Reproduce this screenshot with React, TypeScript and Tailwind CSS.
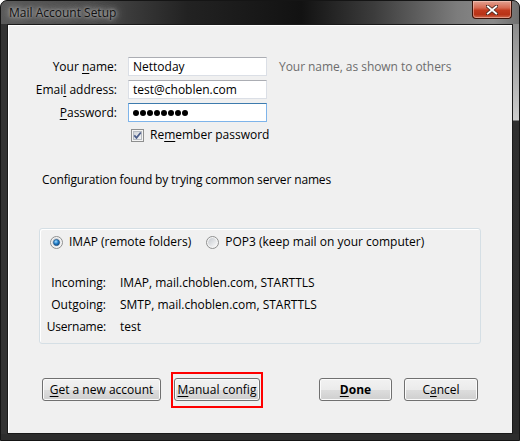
import React from 'react';

// Mnemonic letter, underlined like a Win32 access key
function U({ children }: { children: React.ReactNode }) {
  return <span className="underline decoration-1 underline-offset-[2px]">{children}</span>;
}

function Checkbox() {
  return (
    <svg width="13" height="13" viewBox="0 0 13 13" className="shrink-0">
      <defs>
        <linearGradient id="cbInner" x1="0" y1="0" x2="1" y2="1">
          <stop offset="0" stopColor="#cdd1d6" />
          <stop offset="1" stopColor="#f7f7f7" />
        </linearGradient>
      </defs>
      <rect x="0.5" y="0.5" width="12" height="12" fill="#f4f4f4" stroke="#8e8f8f" />
      <rect x="2.5" y="2.5" width="8" height="8" fill="url(#cbInner)" stroke="#b7bcc2" />
      <path d="M3.3 6.4 L5.5 8.9 L9.8 3.5" fill="none" stroke="#4b5d8a" strokeWidth="1.7" />
    </svg>
  );
}

function Radio({ checked }: { checked?: boolean }) {
  const id = checked ? 'on' : 'off';
  return (
    <svg width="13" height="13" viewBox="0 0 13 13" className="shrink-0">
      <defs>
        <linearGradient id={`rg-${id}`} x1="0" y1="0" x2="1" y2="1">
          <stop offset="0" stopColor="#c4c8ce" />
          <stop offset="1" stopColor="#fbfbfb" />
        </linearGradient>
        <radialGradient id={`rd-${id}`} cx="0.4" cy="0.35" r="0.7">
          <stop offset="0" stopColor="#a6dcff" />
          <stop offset="0.5" stopColor="#2381cb" />
          <stop offset="1" stopColor="#0d4680" />
        </radialGradient>
      </defs>
      <circle cx="6.5" cy="6.5" r="6" fill="#f4f4f4" stroke="#8e8f8f" />
      <circle cx="6.5" cy="6.5" r="4.4" fill={`url(#rg-${id})`} />
      {checked && <circle cx="6.5" cy="6.5" r="3.1" fill={`url(#rd-${id})`} stroke="#1a4a78" strokeWidth="0.6" />}
    </svg>
  );
}

function WinButton({ className, children }: { className: string; children: React.ReactNode }) {
  return (
    <button
      className={`h-[23px] whitespace-nowrap rounded-[3px] border border-[#707070] bg-[linear-gradient(to_bottom,#f2f2f2_0%,#ebebeb_50%,#dddddd_51%,#cfcfcf_100%)] text-[12px] leading-[16px] text-black shadow-[inset_0_0_0_1px_#fbfbfb] ${className}`}
    >
      {children}
    </button>
  );
}

function CloseButton() {
  return (
    <div className="ml-auto mr-[7px] flex h-[18px] w-[40px] items-center justify-center rounded-b-[4px] border border-t-0 border-[#3b1208] bg-[linear-gradient(to_bottom,#e3a292_0%,#d66a52_40%,#c23a1e_55%,#b83216_80%,#cf6a4e_100%)] shadow-[inset_0_0_0_1px_rgba(255,220,210,0.45)]">
      <svg width="12" height="10" viewBox="0 0 12 10">
        <path d="M1.5 1.2 L10.5 8.8 M10.5 1.2 L1.5 8.8" stroke="#4a2a22" strokeWidth="3.4" strokeLinecap="square" />
        <path d="M1.8 1.5 L10.2 8.5 M10.2 1.5 L1.8 8.5" stroke="#ffffff" strokeWidth="1.9" strokeLinecap="square" />
      </svg>
    </div>
  );
}

export default function App() {
  return (
    <div className="h-[441px] w-[520px] bg-white">
      <div className="flex h-[441px] w-[520px] flex-col overflow-hidden rounded-t-[7px] border border-[#151515] bg-[#2d2d2d] font-['Open_Sans',sans-serif] text-[12px] text-black">
        {/* Title bar */}
        <div className="flex h-[23px] items-start bg-[linear-gradient(to_right,#5a5a5a_0%,#4a4a4a_18%,#222222_36%,#121212_58%,#3c3c3c_72%,#7c7c7c_88%,#8a8a8a_95%,#707070_100%)]">
          <span className="ml-[8px] mt-[4px] whitespace-nowrap leading-[16px] text-[#111111] [text-shadow:0_0_3px_#b8b8b8,0_0_6px_#aaaaaa,0_0_10px_#999999,0_0_14px_#8a8a8a]">
            Mail Account Setup
          </span>
          <CloseButton />
        </div>

        <div className="flex flex-1">
          <div className="w-[6px] bg-[#333333]" />

          {/* Client area */}
          <div className="flex w-[506px] flex-col border border-[#1a1a1a] bg-[#f0f0f0] shadow-[inset_1px_1px_0_#ffffff]">
            {/* Identity fields */}
            <div className="mt-[32px] grid grid-cols-[109px_139px_1fr] gap-x-[11px] gap-y-[4px]">
              <label className="h-[19px] text-right leading-[19px]">
                Your <U>n</U>ame:
              </label>
              <div className="h-[19px] border border-[#dbdfe6] border-t-[#abadb3] bg-white pl-[4px] leading-[17px]">Nettoday</div>
              <span className="whitespace-nowrap pl-px leading-[19px] tracking-[-0.05px] text-[#6d6d6d]">Your name, as shown to others</span>

              <label className="h-[19px] text-right leading-[19px]">
                Emai<U>l</U> address:
              </label>
              <div className="h-[19px] border border-[#dbdfe6] border-t-[#abadb3] bg-white pl-[4px] leading-[17px]">test@choblen.com</div>
              <span />

              <label className="h-[19px] text-right leading-[19px]">
                <U>P</U>assword:
              </label>
              <div className="flex h-[19px] items-center gap-[1px] border border-[#7eb4ea] border-t-[#3d7bad] bg-white pl-[4px]">
                {Array.from({ length: 8 }).map((_, i) => (
                  <span key={i} className="h-[6px] w-[6px] rounded-full bg-black" />
                ))}
              </div>
              <span />

              <span />
              <div className="col-span-2 flex h-[18px] items-center gap-[6px] pl-[3px]">
                <Checkbox />
                <span className="whitespace-nowrap">
                  Re<U>m</U>ember password
                </span>
              </div>
            </div>

            <p className="ml-[34px] mt-[28px] whitespace-nowrap leading-[16px] tracking-[-0.15px]">
              Configuration found by trying common server names
            </p>

            {/* Protocol group */}
            <div className="mx-[31px] mt-[40px] rounded-[3px] border border-[#d5dfe5] pb-[5px] pt-[5px] shadow-[inset_1px_1px_0_#ffffff]">
              <div className="flex h-[16px] items-center whitespace-nowrap pl-[10px]">
                <Radio checked />
                <span className="ml-[6px]">IMAP (remote folders)</span>
                <span className="ml-[15px]">
                  <Radio />
                </span>
                <span className="ml-[6px]">POP3 (keep mail on your computer)</span>
              </div>
              <div className="mt-[22px] grid grid-cols-[66px_1fr] gap-x-[14px] whitespace-nowrap">
                <span className="h-[22px] text-right leading-[22px]">Incoming:</span>
                <span className="leading-[22px]">IMAP, mail.choblen.com, STARTTLS</span>
                <span className="h-[22px] text-right leading-[22px]">Outgoing:</span>
                <span className="leading-[22px]">SMTP, mail.choblen.com, STARTTLS</span>
                <span className="h-[22px] text-right leading-[22px] tracking-[-0.2px]">Username:</span>
                <span className="leading-[22px]">test</span>
              </div>
            </div>

            {/* Buttons */}
            <div className="mt-[34px] flex px-[34px]">
              <WinButton className="w-[119px]">
                <U>G</U>et a new account
              </WinButton>
              <div className="relative ml-[13px]">
                <WinButton className="w-[86px]">
                  <U>M</U>anual config
                </WinButton>
                {/* highlight annotation */}
                <div className="pointer-events-none absolute -bottom-[7px] -left-[3px] -right-[3px] -top-[6px] border-2 border-[#ff0000]" />
              </div>
              <WinButton className="ml-auto w-[73px] font-bold">
                <U>D</U>one
              </WinButton>
              <WinButton className="ml-[12px] w-[74px]">
                C<U>a</U>ncel
              </WinButton>
            </div>
          </div>

          <div className="w-[6px] bg-[linear-gradient(to_bottom,#8c8c8c_0px,#cdcdcd_96px,#2f2f2f_97px,#2a2a2a_100%)]" />
        </div>
        <div className="h-[6px] bg-[#2d2d2d]" />
      </div>
    </div>
  );
}
